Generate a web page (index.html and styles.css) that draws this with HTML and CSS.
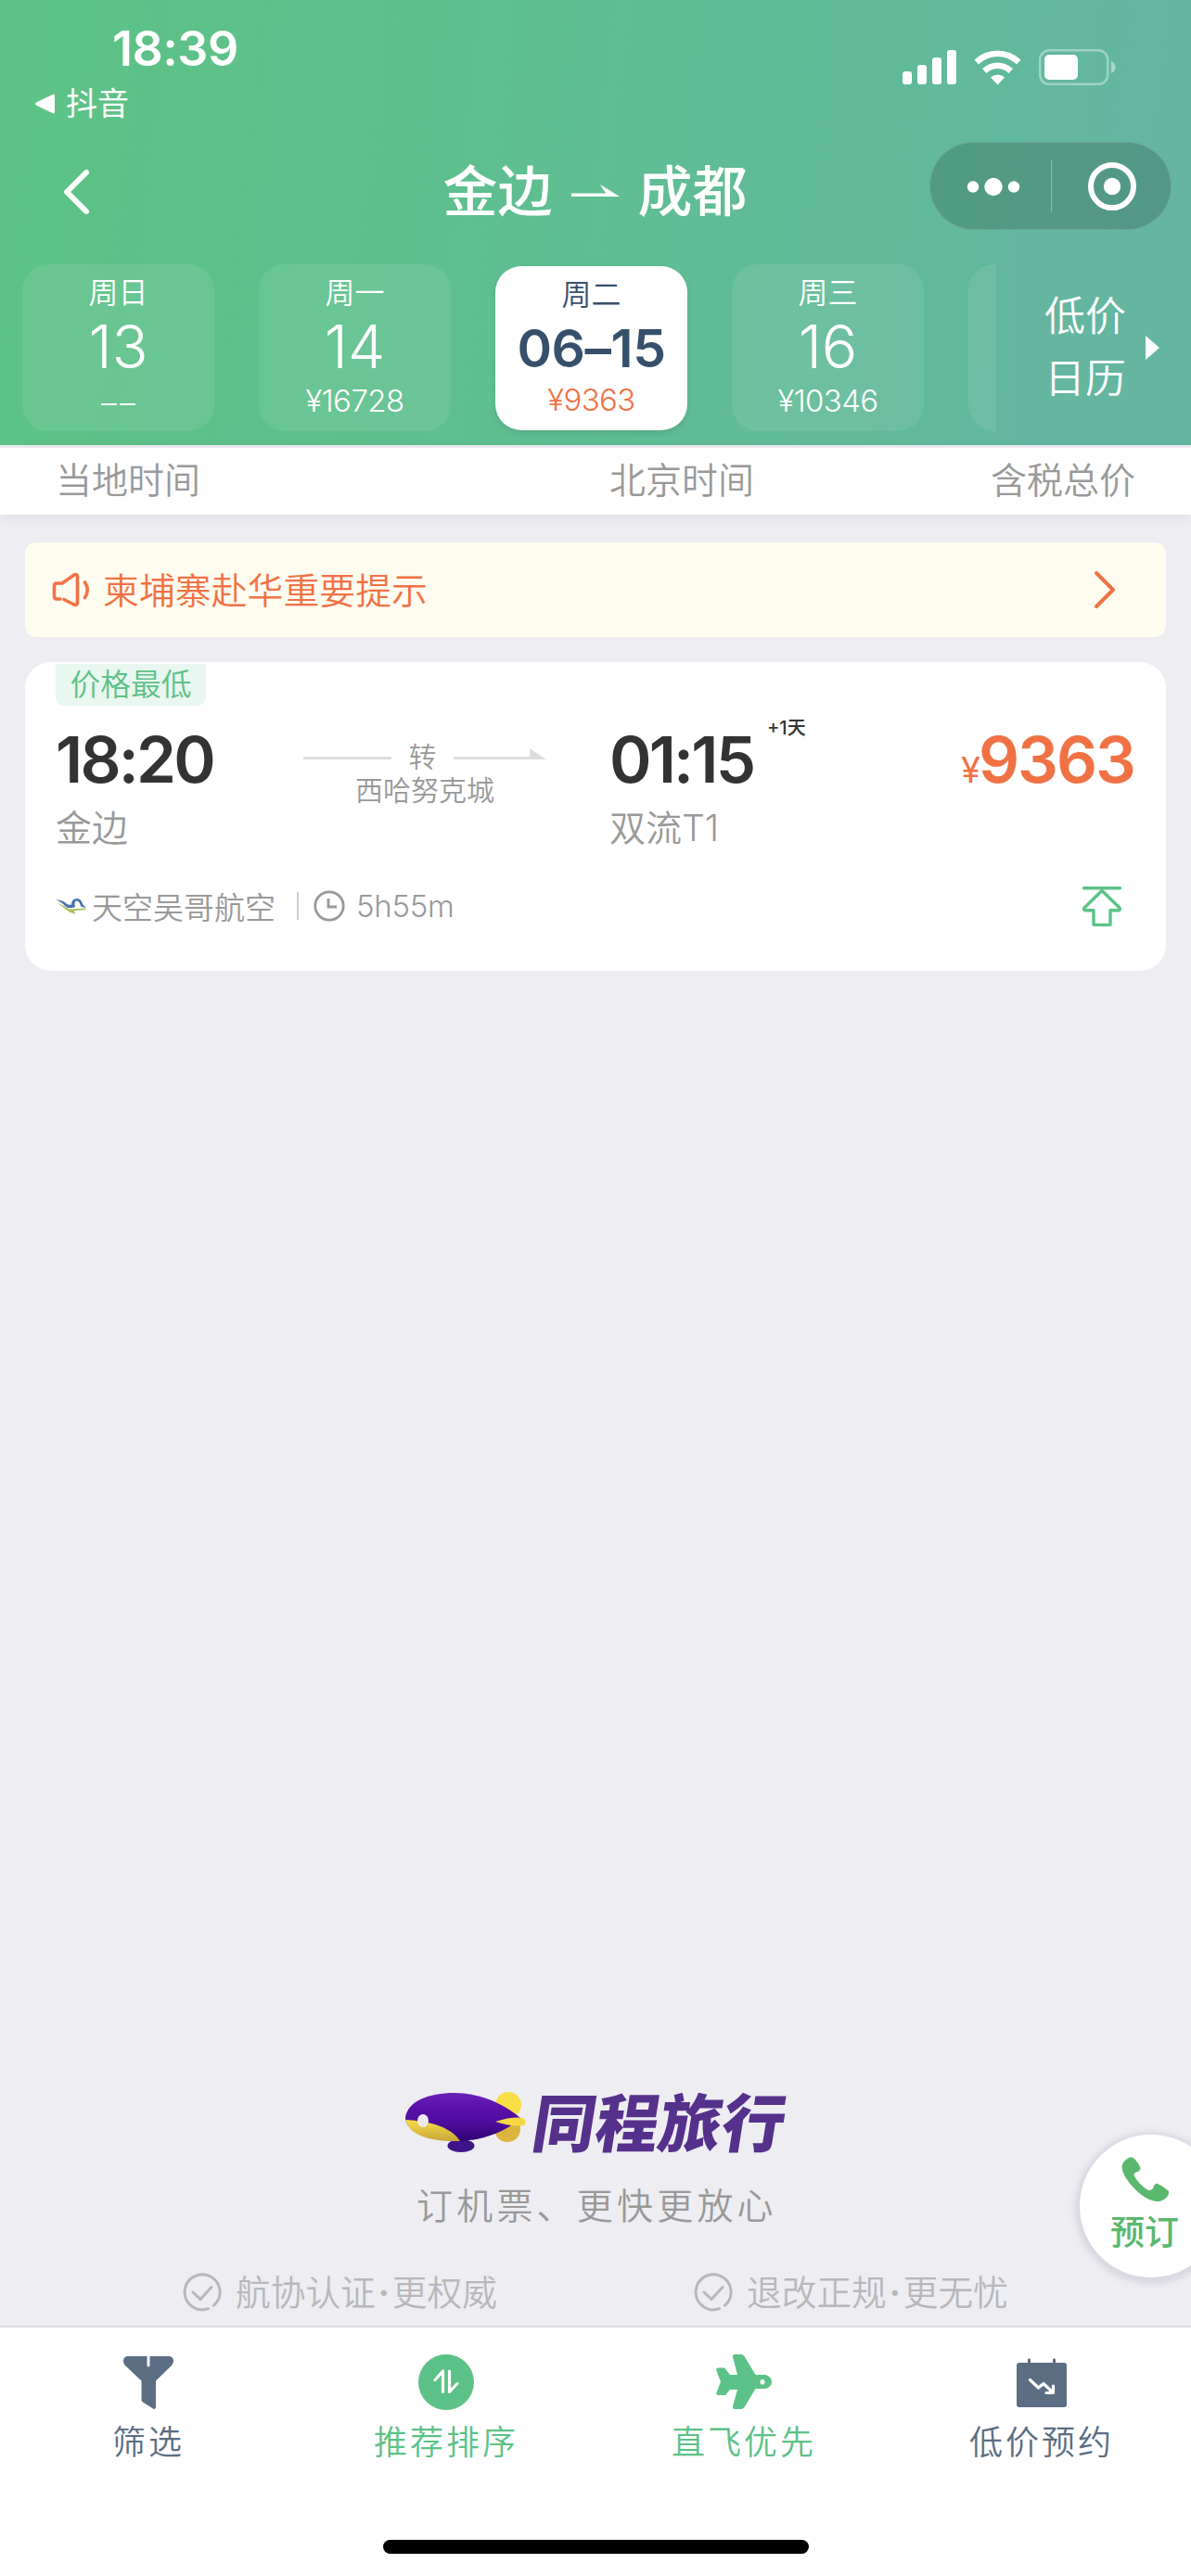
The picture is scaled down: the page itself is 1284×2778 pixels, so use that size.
FILE: index.html
```
<!DOCTYPE html>
<html lang='zh-CN'>
<head>
    <meta charset='UTF-8'>
    <title>金边 - 成都</title>
    <link rel="stylesheet" href="styles.css">
</head>
<body>
<div class='page'>
    <div class='header'>
        <div class='status'>
            <div class='status-left'>
                <div class='clock'>18:39</div>
                <div class='back-app'>
                    <svg width='23' height='22' viewBox='0 0 23 22'><path d='M2 9.5 L20 .8 Q22 0 22 2 V20 Q22 22 20 21.2 L2 12.500 Q0 11 2 9.500Z' fill='#fff'/></svg>
                    <span>抖音</span>
                </div>
            </div>
            <svg class='status-icons' width='230' height='40' viewBox='973 53 230 40' fill='#fff'>
                <rect x='973' y='77' width='10' height='14' rx='3'/>
                <rect x='989' y='70' width='10' height='21' rx='3'/>
                <rect x='1005' y='62' width='10' height='29' rx='3'/>
                <rect x='1021' y='54' width='10' height='37' rx='3'/>
                <path d='M1050.500 64.500 A36 36 0 0 1 1100.500 64.500 L1096 69.500 A29 29 0 0 0 1055 69.500Z'/>
                <path d='M1059 74 A24 24 0 0 1 1092 74 L1087.500 79 A17 17 0 0 0 1063.500 79Z'/>
                <path d='M1068 83.500 A11 11 0 0 1 1083 83.500 L1075.500 91.500Z'/>
                <rect x='1121.200' y='54.200' width='73' height='36.600' rx='10' fill='none' stroke='#fff' stroke-opacity='.38' stroke-width='2.500'/>
                <rect x='1126' y='59' width='36' height='27' rx='5'/>
                <path d='M1198 66 Q1202.500 68 1202.500 72.500 Q1202.500 77 1198 79Z' opacity='.45'/>
            </svg>
        </div>

        <div class='nav'>
            <svg class='nav-back' width='32' height='52' viewBox='0 0 32 52'><path d='M27 5 L6 26 L27 47' fill='none' stroke='#fff' stroke-width='6' stroke-linecap='round' stroke-linejoin='round'/></svg>
            <div class='nav-title'>
                <span>金边</span>
                <svg width='52' height='16' viewBox='0 0 52 16' fill='#fff'><path d='M0 9.500 H37 L31 0 L52 13 H0Z'/></svg>
                <span>成都</span>
            </div>
            <div class='capsule'>
                <svg width='261' height='95' viewBox='1002 153 261 95' fill='#fff'>
                    <circle cx='1049' cy='201.500' r='6.200'/>
                    <circle cx='1071' cy='201.500' r='9.700'/>
                    <circle cx='1093' cy='201.500' r='6.200'/>
                    <rect x='1133' y='173' width='1.200' height='56' opacity='.3'/>
                    <circle cx='1199' cy='201' r='23' fill='none' stroke='#fff' stroke-width='6'/>
                    <circle cx='1199' cy='201' r='9.200'/>
                </svg>
            </div>
        </div>

        <div class='dates'>
            <div class='date-list'>
                <div class='date'>
                    <div class='week'>周日</div>
                    <div class='day'>13</div>
                    <div class='fare fare-none'><i></i><i></i></div>
                </div>
                <div class='date'>
                    <div class='week'>周一</div>
                    <div class='day'>14</div>
                    <div class='fare'>¥16728</div>
                </div>
                <div class='date active'>
                    <div class='week'>周二</div>
                    <div class='day'>06–15</div>
                    <div class='fare'>¥9363</div>
                </div>
                <div class='date'>
                    <div class='week'>周三</div>
                    <div class='day'>16</div>
                    <div class='fare'>¥10346</div>
                </div>
                <div class='date'></div>
            </div>
            <div class='calendar'>
                <div>低价<br>日历</div>
                <svg width='16' height='26' viewBox='0 0 16 26'><path d='M1 0 L16 13 L1 26Z' fill='#fff'/></svg>
            </div>
        </div>
    </div>

    <div class='columns'>
        <div>当地时间</div>
        <div>北京时间</div>
        <div>含税总价</div>
    </div>

    <div class='content'>
        <div class='notice'>
            <svg width='41' height='38' viewBox='56 619 41 38' fill='none' stroke='#f07244' stroke-width='3.600' stroke-linecap='round' stroke-linejoin='round'>
                <path d='M65 648 H61 Q58.500 648 58.500 645 V634 Q58.500 631 61 631 H67 L80 622 Q83.500 620.500 83.500 624 V651 Q83.500 655.500 80 654 L69 648.500'/>
                <path d='M91.500 630 Q97 638 91.500 646.500'/>
            </svg>
            <span>柬埔寨赴华重要提示</span>
            <svg width='24' height='42' viewBox='0 0 24 42'><path d='M3 3 L21 21 L3 39' fill='none' stroke='#f07244' stroke-width='4' stroke-linecap='round' stroke-linejoin='round'/></svg>
        </div>

        <div class='flight'>
            <div class='tag'>价格最低</div>
            <div class='legs'>
                <div class='leg'>
                    <div class='time'>18:20</div>
                    <div class='port'>金边</div>
                </div>
                <div class='transfer'>
                    <div class='transfer-line'>
                        <svg width='95' height='14' viewBox='0 0 95 14'><rect y='10' width='95' height='3' fill='#ddd'/></svg>
                        <span>转</span>
                        <svg width='100' height='14' viewBox='0 0 100 14'><path d='M0 10 H82 V1 L100 13 H0Z' fill='#ddd'/></svg>
                    </div>
                    <div class='transfer-city'>西哈努克城</div>
                </div>
                <div class='leg'>
                    <div class='time'>01:15<span class='plus'>+1天</span></div>
                    <div class='port'>双流T1</div>
                </div>
                <div class='price'><small>¥</small>9363</div>
            </div>
            <div class='airline'>
                <svg width='34' height='18' viewBox='0 0 34 18'>
                    <path d='M1 5 L15 12.500 L31 11.500 L33 13 L22 14 Q17 14 22 17 Q17 18 12 13.500 Z' fill='#a9c05e'/>
                    <path d='M0 2.500 Q7 2 11 6 Q13 8.500 17 7.500 Q17 1 23 1 Q28 1.500 29 7 L33 11.500 L27 9.500 Q26 4 22.500 3.500 Q19.500 4 21 10 Q14 13 10 9 Q6 4 0 2.500Z' fill='#4a72ad'/>
                </svg>
                <span class='airline-name'>天空吴哥航空</span>
                <i></i>
                <svg width='34' height='34' viewBox='0 0 34 34' fill='none' stroke='#999' stroke-width='2.800'><circle cx='17' cy='17' r='15.200'/><path d='M16 9 V18 H25'/></svg>
                <span class='duration'>5h55m</span>
                <svg class='to-top' width='44' height='44' viewBox='0 0 44 44' fill='none' stroke='#5cc287' stroke-width='3.400' stroke-linecap='round' stroke-linejoin='round'>
                    <path d='M2.500 2.800 H41.500'/>
                    <path d='M22 5.500 L41 24 Q42 26.500 40 26.800 H31 V42 Q31 42.500 30 42.500 H14 Q13 42.500 13 42 V26.800 H4 Q2 26.500 3 24Z'/>
                </svg>
            </div>
        </div>
    </div>

    <div class='brand'>
        <div class='logo'>
            <svg width='130' height='68' viewBox='0 0 130 68'>
                <defs>
                    <linearGradient id='hull' x1='0' y1='0' x2='0' y2='1'><stop offset='0' stop-color='#6a22b8'/><stop offset='.3' stop-color='#5a10aa'/><stop offset='.65' stop-color='#4c0c9c'/><stop offset='1' stop-color='#2e0470'/></linearGradient>
                    <linearGradient id='belly' x1='0' y1='0' x2='0' y2='1'><stop offset='0' stop-color='#f5dd45'/><stop offset='1' stop-color='#c9a63c'/></linearGradient>
                </defs>
                <circle cx='111' cy='14' r='14' fill='#f7de46'/>
                <circle cx='110' cy='40' r='14' fill='#dcb63c'/>
                <ellipse cx='60' cy='58' rx='14.500' ry='7' fill='#3f1488'/>
                <path d='M0 28 C2 10 25 1 53 1 C82 1 108 14 124 28 C108 44 80 53 56 53 C25 52 2 45 0 28Z' fill='url(#hull)'/>
                <path d='M.5 30 Q30 32 44 40 Q54 45 59 53 C30 54 4 48 .5 30Z' fill='url(#belly)'/>
                <path d='M97 32 Q120 25 128 29 Q131 33 128 36 Q116 38 97 32Z' fill='#f5d83f'/>
                <ellipse cx='19' cy='31' rx='6' ry='7' fill='#eceaf0'/>
            </svg>
            <span>同程旅行</span>
        </div>
        <div class='slogan'>订机票、更快更放心</div>
        <div class='promises'>
            <div class='promise'>
                <svg width='42' height='42' viewBox='0 0 42 42' fill='none' stroke='#b8b8bb' stroke-width='3' stroke-linecap='round'><path d='M27.500 38.700 A19 19 0 1 1 33.500 35.200'/><path d='M11 21 L19 28.500 L31 15.500'/></svg>
                <span>航协认证<b>·</b>更权威</span>
            </div>
            <div class='promise'>
                <svg width='42' height='42' viewBox='0 0 42 42' fill='none' stroke='#b8b8bb' stroke-width='3' stroke-linecap='round'><path d='M27.500 38.700 A19 19 0 1 1 33.500 35.200'/><path d='M11 21 L19 28.500 L31 15.500'/></svg>
                <span>退改正规<b>·</b>更无忧</span>
            </div>
        </div>
    </div>

    <div class='tabbar'>
        <div class='tab'>
            <svg width='60' height='60' viewBox='130 2539 60 60' fill='#5b6e84'>
                <path d='M137 2541 H158.500 V2551 Q160 2554 161.500 2551 V2541 H183 Q187 2542 187 2546 Q187 2549 185 2551 L168 2567.500 V2596 Q167 2599 165 2597.500 L154 2590.500 Q152.500 2589.500 152.500 2588 V2567.500 L135 2551 Q133 2549 133 2546 Q133 2542 137 2541Z'/>
            </svg>
            <span>筛选</span>
        </div>
        <div class='tab on'>
            <svg width='60' height='60' viewBox='0 0 60 60'>
                <circle cx='30' cy='30' r='30' fill='#5cc287'/>
                <path d='M18 27.500 L26.500 18 V40.500 M33.500 18 V40.500 L42 31.500' fill='none' stroke='#fff' stroke-width='3.200' stroke-linecap='round' stroke-linejoin='round'/>
            </svg>
            <span>推荐排序</span>
        </div>
        <div class='tab on'>
            <svg width='60' height='60' viewBox='772 2539 60 60' fill='#5cc287'>
                <path fill-rule='evenodd' d='M793 2539 H800 L802.500 2541 L814.500 2561 H825 Q832 2563 832 2568.500 Q832 2574.500 825 2576 H814.500 L802.500 2596 L800 2598 H793 Q789.500 2598 790 2595 L795 2577 H787 L782 2583 H774 Q771.500 2582.500 772.500 2580 L777 2568.500 L772.500 2557 Q771.500 2554 774 2553.500 H781 L787 2561 H795 L790 2542 Q789.500 2539 793 2539Z M822 2566 A2 2.800 0 1 0 822 2571.400 A2 2.800 0 1 0 822 2566Z'/>
            </svg>
            <span>直飞优先</span>
        </div>
        <div class='tab'>
            <svg width='60' height='60' viewBox='1093 2539 60 60'>
                <path d='M1099 2548 H1108 V2544.500 Q1109.500 2542 1111 2544.500 V2548 H1135 V2544.500 Q1136.500 2542 1138 2544.500 V2548 H1147 Q1150 2548 1150 2551 V2593 Q1150 2596 1147 2596 H1099 Q1096 2596 1096 2593 V2551 Q1096 2548 1099 2548Z' fill='#5b6e84'/>
                <path d='M1110.500 2566.500 L1119.500 2575 L1125 2570.500 L1135 2580 M1135.500 2573 V2580.500 H1128' fill='none' stroke='#fff' stroke-width='3.200' stroke-linecap='round' stroke-linejoin='round'/>
            </svg>
            <span>低价预约</span>
        </div>
        <div class='home-bar'></div>
    </div>

    <!-- floating call button -->
    <div class='call'>
        <svg width='54' height='50' viewBox='0 0 54 50'><path d='M9 1 Q12 -1 15 2 Q20 7 21.500 12 Q22 14 19 16 Q14 17 14.500 20 Q19 29 29 35.500 Q33 37 35 34 Q37 28 40 29 Q47 32 51.500 36.500 Q53 39 51 42 Q45 50 36 47.500 Q24 45 12 31 Q1 18 1.500 10 Q3 4 9 1Z' fill='#5ab86e'/></svg>
        <span>预订</span>
    </div>
</div>
</body>
</html>
```

FILE: styles.css
```
html, body {
    margin:0px;
    padding:0px;
    background:#eeedf2;
    font-family:Inter, "Noto Sans CJK SC", sans-serif;
    font-weight:350;
}

svg {
    display:block;
    flex:none;
}

.page {
    position:relative;
    width:1284px;
    height:2778px;
    overflow:hidden;
    display:flex;
    flex-direction:column;
    white-space:nowrap;
}

/* green header */
.header {
    height:480px;
    background:linear-gradient(97deg, #5dc384 0%, #5fbe92 50%, #64b5a3 100%);
    color:white;
}

.status {
    height:153px;
    display:flex;
    justify-content:space-between;
    box-sizing:border-box;
    padding:24px 81px 0px 37px;
}

.clock {
    padding-left:84px;
    font-size:52px;
    line-height:58px;
    font-weight:600;
    letter-spacing:-0.5px;
}

.back-app {
    display:flex;
    align-items:center;
    gap:11px;
    margin-top:12px;
    font-size:34px;
    line-height:36px;
    font-weight:400;
}

.status-icons {
    margin-top:29px;
}

.nav {
    height:95px;
    display:grid;
    grid-template-columns:1fr auto 1fr;
    align-items:center;
    padding:0px 21px 0px 66px;
}

.nav-back {
    margin-top:12px;
}

.nav-title {
    display:flex;
    align-items:center;
    gap:20px;
    margin:13px 0px 0px -46px;
    font-size:59px;
    line-height:60px;
    font-weight:500;
}

.capsule {
    justify-self:end;
    width:261px;
    height:95px;
    border-radius:48px;
    background:rgba(0,0,0,.16);
    box-shadow:inset 0 0 0 1px rgba(255,255,255,.15);
}

.dates {
    display:flex;
    height:232px;
}

.date-list {
    width:1050px;
    padding:37px 0px 0px 24px;
    display:flex;
    gap:48px;
    overflow:hidden;
}

.date {
    flex:none;
    width:207px;
    height:180px;
    border-radius:28px;
    background:rgba(255,255,255,.08);
    text-align:center;
}

.week {
    padding-top:10px;
    font-size:32px;
    line-height:42px;
}

.day {
    font-size:64px;
    line-height:74px;
    font-weight:300;
}

.fare {
    font-size:33px;
    line-height:42px;
    letter-spacing:-0.6px;
}

.fare-none {
    display:flex;
    justify-content:center;
    align-items:center;
    gap:3px;
    height:42px;
    padding-top:4px;
}

.fare-none i {
    width:17px;
    height:2px;
    background:white;
}

.date.active {
    height:177px;
    margin-top:2px;
    background:white;
    color:#36506c;
    box-shadow:0px 3px 6px rgba(0,0,0,.1);
}

.active .day {
    font-size:57px;
    font-weight:600;
    line-height:73px;
    letter-spacing:-0.5px;
}

.active .fare {
    color:#f07244;
    line-height:39px;
}

.calendar {
    flex:1;
    display:flex;
    align-items:center;
    gap:20px;
    padding:22px 0px 0px 52px;
    background:linear-gradient(90deg, #62b89c, #64b6a1 10%);
    font-size:44px;
    line-height:67px;
}

/* column titles under the dates */
.columns {
    display:grid;
    grid-template-columns:597px 1fr auto;
    height:72px;
    margin-top:3px;
    padding:0px 60px 0px 60px;
    background:#fefefe;
    box-shadow:0px 4px 14px rgba(60,50,90,.08);
    color:#999;
    font-size:39px;
    line-height:69px;
}

.content {
    padding:30px 27px 0px;
}

.notice {
    display:flex;
    align-items:center;
    height:102px;
    padding:0px 54px 0px 29px;
    border-radius:12px;
    background:#fffcf0;
    color:#f07244;
    font-size:38.9px;
}

.notice span {
    flex:1;
    padding:0px 0px 5px 14px;
}

.flight {
    height:333px;
    margin-top:27px;
    border-radius:28px;
    background:white;
    color:#999;
    overflow:hidden;
}

.tag {
    width:162px;
    height:45px;
    margin:2px 0px 0px 33px;
    border-radius:0px 0px 9px 9px;
    background:#e8f7ef;
    color:#5cc287;
    font-size:32.8px;
    line-height:44px;
    text-align:center;
}

.legs {
    display:grid;
    grid-template-columns:266px 331px 1fr auto;
    padding:22px 34px 0px 33px;
}

.time {
    position:relative;
    color:#333;
    font-size:69px;
    font-weight:600;
    line-height:72px;
    letter-spacing:-2.8px;
}

.port {
    margin-top:15px;
    font-size:39px;
    line-height:46px;
}

.plus {
    position:absolute;
    left:170px;
    top:-8px;
    font-size:20px;
    line-height:20px;
    font-weight:500;
    letter-spacing:0px;
}

.transfer {
    width:262px;
    padding:15px 0px 0px 1px;
    font-size:30px;
    line-height:36px;
    text-align:center;
}

.transfer-line {
    display:flex;
    justify-content:space-between;
    align-items:center;
    height:36px;
}

.transfer-line svg {
    margin-top:-6px;
}

.price {
    color:#f07244;
    font-size:69px;
    font-weight:600;
    line-height:72px;
    letter-spacing:-2px;
}

.price small {
    font-size:38px;
    font-weight:400;
}

.airline {
    display:flex;
    align-items:center;
    height:46px;
    margin-top:38px;
    padding:0px 47px 0px 33px;
    font-size:33px;
}

.airline-name {
    margin-left:5px;
}

.airline i {
    width:2px;
    height:30px;
    margin:0px 16px 0px 23px;
    background:#ccc;
}

.duration {
    margin-left:12px;
    font-weight:300;
    letter-spacing:-0.3px;
}

.to-top {
    margin-left:auto;
}

/* brand footer */
.brand {
    margin-top:auto;
    height:252px;
}

.logo {
    display:flex;
    align-items:center;
    height:68px;
    padding-left:437px;
}

.logo span {
    margin-left:8px;
    color:#56318c;
    font-size:68px;
    line-height:68px;
    font-weight:900;
    transform:skewX(-9deg);
}

.slogan {
    margin-top:30px;
    padding-left:449px;
    color:#999;
    font-size:39px;
    line-height:50px;
    letter-spacing:4.2px;
}

.promises {
    display:grid;
    grid-template-columns:551px 1fr;
    margin-top:43px;
    padding-left:197px;
}

.promise {
    display:flex;
    align-items:center;
    gap:15px;
    color:#b8b8bb;
    font-size:37.7px;
    line-height:50px;
}

.promise b {
    display:inline-block;
    width:18px;
    text-align:center;
}

.tabbar {
    display:grid;
    grid-template-columns:repeat(4, 1fr);
    grid-template-rows:200px 1fr;
    box-sizing:border-box;
    height:270px;
    border-top:2px solid #dcdcdf;
    background:white;
}

.tab {
    display:flex;
    flex-direction:column;
    align-items:center;
    padding:29px 2px 0px 0px;
    color:#5b6e84;
    font-size:36px;
    line-height:48px;
    letter-spacing:3px;
}

.tab span {
    margin-top:11px;
    margin-right:-1px;
}

.tab.on {
    color:#5cc287;
}

.home-bar {
    grid-column:1 / 5;
    justify-self:center;
    width:459px;
    height:15px;
    margin-top:29px;
    border-radius:8px;
    background:black;
}

.call {
    position:absolute;
    left:1164px;
    top:2302px;
    width:154px;
    height:154px;
    border-radius:50%;
    background:white;
    box-shadow:0px 2px 4px 5px rgba(60,55,80,.07), 0px 2px 10px 8px rgba(60,55,80,.03);
    color:#5ab86e;
}

.call svg {
    margin:24px 0px 0px 44px;
}

.call span {
    display:block;
    margin:10px 0px 0px 33px;
    font-size:37px;
    line-height:44px;
    font-weight:500;
}
```
